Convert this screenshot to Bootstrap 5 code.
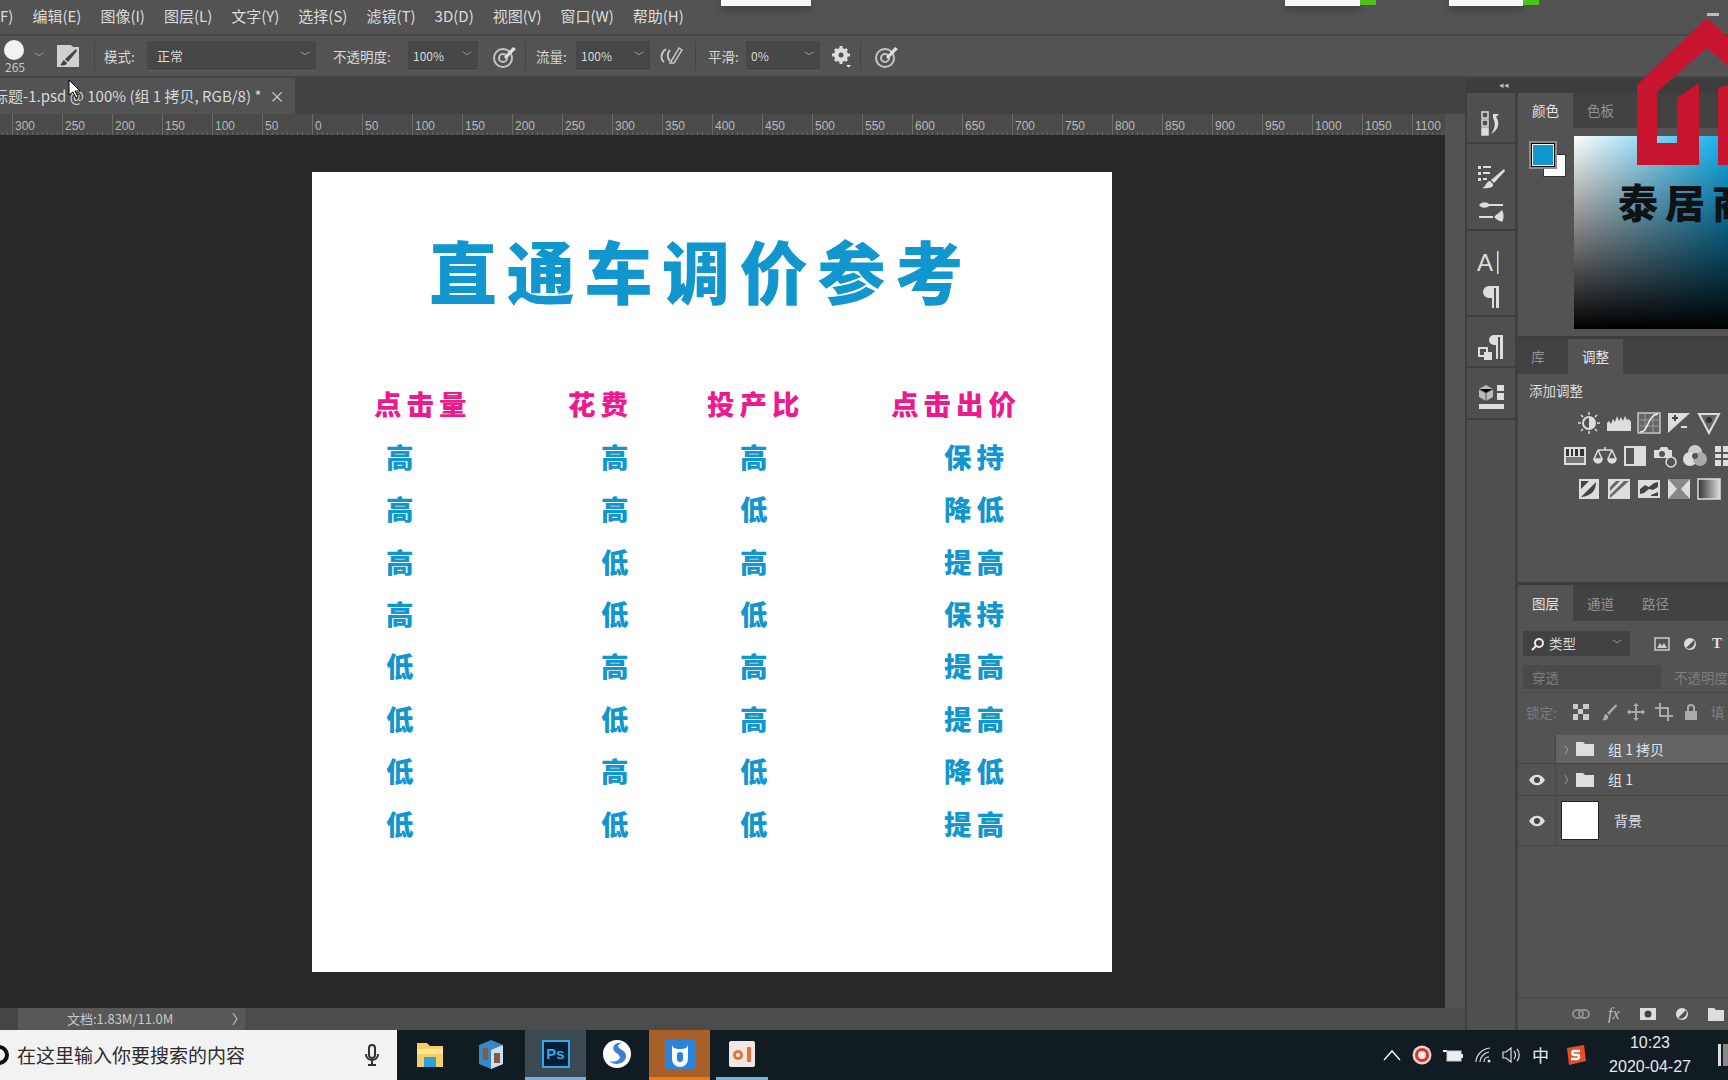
<!DOCTYPE html>
<html lang="zh-CN">
<head>
<meta charset="UTF-8">
<title>直通车调价参考 - Photoshop</title>
<link href="https://cdn.jsdelivr.net/npm/bootstrap@5.3.0/dist/css/bootstrap.min.css" rel="stylesheet">
<style>
html, body { width: 1728px; height: 1080px; overflow: hidden; }
body { background: #535353; color: #d8d8d8; font-family: "Liberation Sans", "Noto Sans CJK SC", sans-serif; font-size: 13px; position: relative; }
.zh { font-family: "Noto Sans CJK SC", sans-serif; }

/* top of the window */
.menu-bar { height: 36px; flex: none; margin-left: -5px; gap: 19px; border-bottom: 2px solid #474747; font-size: 15px; color: #dcdcdc; width: 1733px; padding-bottom: 2px; }
.opt-bar { height: 42px; flex: none; display: grid; align-items: center; grid-template-columns: 30px 26px 38px 6px 47px 169px 14px 74px 74px 47px 8px 41px 76px 45px 10px 41px 74px 40px 10px 40px; border-bottom: 2px solid #454545; font-size: 13.5px; }
.opt-label { padding-left: 3px; white-space: nowrap; }
.opt-sep { width: 1px; height: 30px; background: #454545; }
.opt-field { height: 30px; background: #474747; display: flex; align-items: center; justify-content: space-between; padding: 0 6px 0 5px; border-bottom: 1px solid #5e5e5e; font-size: 12px; }
.opt-select { padding-left: 10px; font-size: 13px; }
.brush-dot { width: 20px; height: 20px; border-radius: 50%; background: #f2f2f2; margin: 0 0 0 4px; }
.brush-num { font-size: 12px; line-height: 12px; margin-left: 5px; margin-top: 1px; color: #c8c8c8; }
.chev { color: #a8a8a8; font-size: 10px; }

/* document area */
.main-row { height: 952px; flex: none; }
.left-side { width: 1465px; flex: none; height: 952px; }
.tab-row { height: 36px; flex: none; background: #424242; }
.doc-tab { width: 295px; background: #535353; white-space: nowrap; overflow: hidden; font-size: 15px; }
.doc-tab span:first-child { margin-left: -7px; }
.ruler-row { width: 1445px; height: 21px; flex: none; background: #4a4a4a; overflow: hidden; background-image: repeating-linear-gradient(to right, #666 0 1px, transparent 1px 5px); background-size: 100% 3px; background-repeat: no-repeat; background-position: 2px bottom; color: #b8b8b8; font-size: 12px; }
.ruler-gap { width: 12px; flex: none; }
.ruler-cell { width: 50px; flex: none; border-left: 1px solid #6a6a6a; padding-left: 2px; line-height: 25px; }
.canvas-area { width: 1445px; height: 873px; flex: none; background: #282828; padding: 37px 0 0 312px; }
.sheet { width: 800px; height: 800px; background: #fff; padding-top: 58px; font-family: "Noto Sans CJK SC", sans-serif; font-weight: 900; }
.sheet-title { margin: 0; padding-left: 117px; font-size: 68px; line-height: 80px; letter-spacing: 9.7px; color: #1296cf; font-weight: 900; white-space: nowrap; }
.price-grid { margin: 68px 0 0 62px; display: grid; grid-template-columns: 194px 139px 184px 160px; grid-auto-rows: 52.4px; align-items: center; font-size: 27.5px; letter-spacing: 5px; line-height: 1; color: #1296cf; white-space: nowrap; }
.price-head { color: #ec1a8e; }
.off-0 { padding-left: 12px; }
.off-1, .off-2 { padding-left: 33px; }
.off-3 { padding-left: 53px; }
.status-row { height: 22px; flex: none; width: 1465px; background: #4c4c4c; font-size: 13px; }
.status-zoom { width: 18px; background: #444; height: 100%; }
.status-info { width: 227px; height: 100%; background: #585858; padding: 0 0 0 49px; color: #c8c8c8; }

/* collapsed icon column */
.dock-line { width: 2px; flex: none; background: #3d3d3d; }
.dock-strip { height: 15px; flex: none; background: #3d3d3d; color: #bbb; font-size: 9px; line-height: 15px; padding-left: 32px; }
.dock-col { width: 48px; flex: none; border-right: 3px solid #3f3f3f; box-sizing: content-box; background: #4f4f4f; }
.dock-group { border-bottom: 2px solid #3f3f3f; gap: 10px; padding-top: 12px; }
.g-51 { height: 51px; }
.g-87 { height: 87px; }

/* panels */
.panel-side { width: 210px; flex: none; }
.panel-tabs { background: #424242; font-size: 13.5px; color: #929292; flex: none; }
.panel-tab { width: 55px; text-align: center; }
.panel-tab.on { background: #535353; color: #e4e4e4; }
.panel-gap { height: 3px; flex: none; background: #3d3d3d; }
.fg-swatch { left: 13px; top: 15px; width: 24px; height: 24px; background: #1296cf; border: 1px solid #000; outline: 2px solid #8d8d8d; box-shadow: inset 0 0 0 1px #fff; z-index: 1; }
.bg-swatch { left: 25px; top: 26px; width: 23px; height: 23px; background: #fff; border: 1px solid #333; }
.color-field { position: absolute; left: 56px; top: 8px; width: 154px; height: 193px; background: linear-gradient(to bottom, rgba(0,0,0,0), #000), linear-gradient(to right, #fff, #0fb0f0); }
.adj-row { gap: 6px; height: 33px; align-items: center; }
.adj-row svg { width: 24px; height: 24px; flex: none; }
.layer-select { height: 25px; width: 107px; margin: 10px 0 0 5px; background: #424242; padding: 0 8px; font-size: 13.5px; }
.blend-row { height: 24px; margin: 9px 0 0 5px; color: #7d7d7d; font-size: 13.5px; }
.blend-field { width: 144px; height: 24px; background: #4a4a4a; padding-left: 9px; }
.lock-row { height: 39px; margin-top: 3px; border-top: 1px solid #484848; padding-left: 8px; color: #7d7d7d; font-size: 13.5px; white-space: nowrap; }
.eye-col { width: 38px; flex: none; border-right: 1px solid #484848; }
.layer-row { border-bottom: 1px solid #474747; font-size: 14px; color: #e2e2e2; }
.layer-sel { background: #646464; }
.lay-thumb { width: 38px; height: 39px; background: #fff; border: 1px solid #222; margin-left: 5px; }
.panel-foot { margin-top: auto; height: 33px; border-top: 1px solid #464646; color: #aaa; }

/* taskbar */
.task-bar { height: 50px; flex: none; background: #101b22; }
.search-box { width: 397px; flex: none; background: #f2f2f2; color: #2c2c2c; font-size: 19px; padding-left: 17px; white-space: nowrap; overflow: hidden; }
.search-ring { left: -11px; top: 15px; width: 20px; height: 20px; border-radius: 50%; border: 4px solid #111; }
.task-app { width: 61px; height: 100%; flex: none; border-bottom: 3px solid transparent; }
.app-ps { background: #3b4a50; border-bottom-color: #76b0de; }
.app-bull { background: #a8602a; border-bottom-color: #f07a10; }
.app-open { border-bottom-color: #76b0de; }
.tray-time { width: 100px; flex: none; margin-left: 14px; text-align: center; font-size: 16px; line-height: 24px; color: #e8e8e8; white-space: nowrap; }

/* things lying over the window */
.toast-strip { position: absolute; top: 0; height: 6px; background: #f4f8fb; box-shadow: 0 3px 8px rgba(0,0,0,.35); z-index: 5; }
.toast-end { position: absolute; right: -16px; top: 0; width: 16px; height: 5px; background: #4dc21f; }
.min-dash { position: absolute; left: 1707px; top: 13px; width: 12px; height: 3px; background: #bcbcbc; z-index: 7; }
.logo-mark { position: absolute; left: 0; top: 0; z-index: 6; pointer-events: none; }
.logo-text { position: absolute; left: 1618px; top: 176px; font-family: "Noto Sans CJK SC", sans-serif; font-weight: 900; font-size: 40px; line-height: 50px; letter-spacing: 7px; color: #0c1216; white-space: nowrap; z-index: 6; }
.mouse-arrow { position: absolute; left: 68px; top: 79px; z-index: 8; }
</style>
</head>
<body>

<!-- menu -->
<div class="menu-bar d-flex align-items-center zh">
  <span>(F)</span><span>编辑(E)</span><span>图像(I)</span><span>图层(L)</span><span>文字(Y)</span><span>选择(S)</span><span>滤镜(T)</span><span>3D(D)</span><span>视图(V)</span><span>窗口(W)</span><span>帮助(H)</span>
</div>

<!-- tool options -->
<div class="opt-bar zh">
  <div><div class="brush-dot"></div><div class="brush-num">265</div></div>
  <span class="chev ps-1">﹀</span>
  <svg width="24" height="24" viewBox="0 0 24 24"><path d="M1 1h14l2 2h6v20H1z" fill="#d0d0d0"/><path d="M20 5 9 15l3 3L21 7zM8 16c-2 1-2 4-4 5 3 1 7 0 7-2z" fill="#444"/></svg>
  <div class="opt-sep"></div>
  <span class="opt-label" style="padding-left:4px">模式:</span>
  <div class="opt-field opt-select"><span>正常</span><span class="chev">﹀</span></div>
  <span></span>
  <span class="opt-label">不透明度:</span>
  <div class="opt-field" style="margin-left:4px"><span>100%</span><span class="chev">﹀</span></div>
  <svg style="margin-left:14px" width="26" height="26" viewBox="0 0 26 26" fill="none" stroke="#c4c4c4" stroke-width="2"><circle cx="11" cy="15" r="9"/><circle cx="11" cy="15" r="4"/><path d="m12 14 9-10 3 2-10 10z" fill="#ddd" stroke="none"/></svg>
  <div class="opt-sep"></div>
  <span class="opt-label">流量:</span>
  <div class="opt-field" style="margin-left:2px"><span>100%</span><span class="chev">﹀</span></div>
  <svg class="ms-2" width="26" height="26" viewBox="0 0 26 26" fill="none" stroke="#c4c4c4" stroke-width="2"><path d="M8 6c-5 3-6 10-2 13M12 7c-3 3-3 8 0 11"/><path d="m12 20 9-15 3 2-8 13z" stroke-width="1.5"/></svg>
  <div class="opt-sep"></div>
  <span class="opt-label">平滑:</span>
  <div class="opt-field"><span>0%</span><span class="chev">﹀</span></div>
  <svg style="margin-left:11px" width="22" height="24" viewBox="0 0 22 24"><circle cx="10" cy="11" r="5" fill="none" stroke="#ddd" stroke-width="4"/><path d="M10 2v18M1 11h18M4 5l12 12M16 5 4 17" stroke="#ddd" stroke-width="3"/><circle cx="10" cy="11" r="2.5" fill="#535353"/><path d="m15 21 5 0-2.500 2.500z" fill="#eee"/></svg>
  <div class="opt-sep"></div>
  <svg class="ms-1" width="26" height="26" viewBox="0 0 26 26" fill="none" stroke="#c4c4c4" stroke-width="2"><circle cx="11" cy="15" r="9"/><circle cx="11" cy="15" r="4"/><path d="m12 14 9-10 3 2-10 10z" fill="#ddd" stroke="none"/></svg>
</div>

<div class="main-row d-flex">
  <div class="left-side d-flex flex-column">
    <div class="tab-row d-flex">
      <div class="doc-tab d-flex align-items-center zh"><span>标题-1.psd @ 100% (组 1 拷贝, RGB/8) *</span><span class="ms-2">×</span></div>
    </div>
    <div class="ruler-row d-flex" id="ruler"><div class="ruler-gap"></div></div>
    <div class="canvas-area">
      <div class="sheet">
        <h1 class="sheet-title">直通车调价参考</h1>
        <div class="price-grid" id="priceGrid"></div>
      </div>
    </div>
    <div class="status-row d-flex align-items-center zh">
      <div class="status-zoom"></div>
      <div class="status-info d-flex align-items-center justify-content-between"><span>文档:1.83M/11.0M</span><span>〉</span></div>
    </div>
  </div>

  <div class="dock-line"></div>
  <div class="flex-grow-1 d-flex flex-column">
    <div class="dock-strip">◂◂</div>
    <div class="d-flex flex-grow-1" style="min-height:0">
      <!-- collapsed panels -->
      <div class="dock-col">
        <div class="dock-group g-51 d-flex flex-column align-items-center justify-content-center">
          <svg width="24" height="28" viewBox="0 0 24 28" fill="none" stroke="#ddd" stroke-width="1.500"><rect x="3" y="2" width="6" height="6"/><rect x="3" y="10" width="6" height="6"/><rect x="3" y="18" width="6" height="7" fill="#ddd"/><path d="M14 4h6l-3 3c4 5 3 13-5 17 4-5 5-11 2-16z" fill="#ddd" stroke="none"/></svg>
        </div>
        <div class="dock-group g-87 d-flex flex-column align-items-center justify-content-center">
          <svg width="28" height="26" viewBox="0 0 28 26"><path d="M1 3h3v3H1zM1 9h3v3H1zM1 15h3v3H1zM6 3h8v2H6zM6 9h7v2H6zM6 15h4v2H6z" fill="#ddd"/><path d="M27 6 14 17l3 3L28 8zM13 18c-4 0-4 6-8 7 5 1 12 0 11-4z" fill="#ddd"/></svg>
          <svg width="28" height="24" viewBox="0 0 28 24"><path d="M2 6c3-4 8-3 10-1h14v2H12c-2 2-7 3-10-1zM2 17h14v2H2z" fill="#ddd"/><path d="M17 18c2-2 6-5 8-7 2 3 2 9 0 12-3-1-6-3-8-5z" fill="#ddd"/></svg>
        </div>
        <div class="dock-group g-87 d-flex flex-column align-items-center justify-content-center" style="height:86px">
          <svg width="28" height="26" viewBox="0 0 28 26"><text x="0" y="22" font-family="Liberation Sans" font-size="24" fill="#ddd">A</text><path d="M20 2h1.500v23H20z" fill="#ddd"/></svg>
          <svg width="20" height="24" viewBox="0 0 20 24"><path d="M18 1H8a6 6 0 0 0 0 12h3v10h2V3h2v20h3z" fill="#ddd"/></svg>
        </div>
        <div class="dock-group g-51 d-flex flex-column align-items-center justify-content-center">
          <svg width="28" height="28" viewBox="0 0 28 28"><path d="M26 1h-9a5 5 0 0 0 0 10h2v14h2V3h2v22h3z" fill="#ddd"/><rect x="2" y="14" width="8" height="8" fill="none" stroke="#ddd" stroke-width="2"/><rect x="7" y="18" width="8" height="8" fill="#ddd"/></svg>
        </div>
        <div class="dock-group g-51 d-flex flex-column align-items-center justify-content-center" style="height:52px;padding-top:8px">
          <svg width="28" height="28" viewBox="0 0 28 28"><path d="M9 2 2 6v8l7 4 7-4V6z" fill="#bbb"/><path d="M9 10v8M2 6l7 4 7-4" stroke="#4f4f4f"/><path d="M20 2h7v6h-7zM20 10h7v7h-7zM2 21h25v5H2z" fill="#ddd"/></svg>
        </div>
      </div>

      <div class="panel-side d-flex flex-column">
        <!-- colour -->
        <div class="panel-tabs d-flex align-items-center zh" style="height:35px">
          <div class="panel-tab on h-100 d-flex align-items-center justify-content-center">颜色</div>
          <div class="panel-tab">色板</div>
        </div>
        <div class="position-relative" style="height:208px;flex:none">
          <div class="position-absolute fg-swatch"></div>
          <div class="position-absolute bg-swatch"></div>
          <div class="color-field"></div>
        </div>
        <div class="panel-gap"></div>
        <!-- adjustments -->
        <div class="panel-tabs d-flex zh" style="height:35px">
          <div class="panel-tab" style="width:50px;line-height:35px;padding-right:10px">库</div>
          <div class="panel-tab on" style="line-height:35px">调整</div>
        </div>
        <div style="height:208px;flex:none">
          <div class="zh" style="padding:6px 0 0 11px;line-height:20px;color:#dcdcdc;font-size:13.5px">添加调整</div>
          <div class="d-flex adj-row" style="padding:6px 0 0 59px;height:39px;box-sizing:border-box">
            <svg viewBox="0 0 24 24"><circle cx="12" cy="12" r="6" fill="none" stroke="#ddd" stroke-width="2"/><path d="M12 6a6 6 0 0 1 0 12z" fill="#ddd"/><path d="M12 1v3M12 20v3M1 12h3M20 12h3M4 4l2 2M18 18l2 2M4 20l2-2M18 6l2-2" stroke="#ddd" stroke-width="1.500"/></svg>
            <svg viewBox="0 0 24 24"><path d="M0 20V12l2-2 2 3 2-5 2 3 2-6 2 5 2-4 2 4 2-5 2 4 2-1 2 3v9z" fill="#ddd"/></svg>
            <svg viewBox="0 0 24 24"><rect x="1" y="2" width="22" height="20" fill="#666" stroke="#c8c8c8" stroke-width="1.500"/><path d="M8 2v20M16 2v20M1 9h22M1 15h22" stroke="#999"/><path d="M3 21c9 0 7-17 18-18" fill="none" stroke="#eee" stroke-width="1.500"/></svg>
            <svg viewBox="0 0 24 24"><rect x="1" y="2" width="22" height="20" fill="#ddd"/><path d="M23 2 1 22h22z" fill="#555"/><path d="M5 7h6M8 4v6" stroke="#444" stroke-width="2"/><path d="M14 16h6" stroke="#ddd" stroke-width="2"/></svg>
            <svg viewBox="0 0 24 24"><path d="M2 3h20L12 22z" fill="#666" stroke="#ddd" stroke-width="2"/><circle cx="12" cy="9" r="3" fill="#333"/></svg>
          </div>
          <div class="d-flex adj-row" style="padding-left:45px">
            <svg viewBox="0 0 24 24"><rect x="1" y="3" width="22" height="18" fill="#ddd"/><path d="M3 5h3v7H3zM8 5h2v7H8zM12 5h3v7h-3zM17 5h4v7h-4z" fill="#333"/><rect x="3" y="13" width="18" height="6" fill="#777"/></svg>
            <svg viewBox="0 0 24 24" fill="none" stroke="#ddd" stroke-width="1.500"><path d="M5 6h14M12 3v3M5 6 1 15M5 6l4 9M19 6l-4 9M19 6l4 9"/><path d="M1 15a4 4 0 0 0 8 0zM15 15a4 4 0 0 0 8 0z" fill="#ddd"/></svg>
            <svg viewBox="0 0 24 24"><rect x="1" y="2" width="22" height="20" fill="#ddd"/><rect x="3" y="4" width="8" height="16" fill="#555"/></svg>
            <svg viewBox="0 0 24 24"><path d="M1 6h5l2-3h6l2 3h3v8H1z" fill="#ddd"/><circle cx="9" cy="10" r="3" fill="#555"/><circle cx="18" cy="18" r="5" fill="#555" stroke="#ddd" stroke-width="1.500"/></svg>
            <svg viewBox="0 0 24 24"><circle cx="12" cy="8" r="7" fill="#ccc"/><circle cx="7" cy="15" r="7" fill="#ddd"/><circle cx="17" cy="15" r="7" fill="#aaa"/><circle cx="12" cy="12" r="3" fill="#555"/></svg>
            <svg viewBox="0 0 24 24"><rect x="2" y="2" width="22" height="20" fill="#ddd"/><path d="M9 2v20M16 2v20M2 9h22M2 15h22" stroke="#555" stroke-width="2"/></svg>
          </div>
          <div class="d-flex adj-row" style="padding-left:59px">
            <svg viewBox="0 0 24 24"><rect x="2" y="2" width="20" height="20" fill="#ddd"/><path d="M4 20 19 5c0 8-4 14-15 15zM4 4h8L4 12z" fill="#444"/></svg>
            <svg viewBox="0 0 24 24"><rect x="1" y="2" width="22" height="20" fill="#ddd"/><path d="M3 18 17 4h5L3 21zM3 10l6-6h4L3 14z" fill="#666"/></svg>
            <svg viewBox="0 0 24 24"><rect x="1" y="3" width="22" height="18" fill="#ddd"/><path d="M3 12l5-4 4 2 5-4 4-1v5l-5 3-4-1-5 4-4 1zM14 18l7-3v4h-7z" fill="#444"/></svg>
            <svg viewBox="0 0 24 24"><rect x="1" y="2" width="22" height="20" fill="#ddd"/><path d="M1 2h22L14 12l9 10H1l9-10z" fill="#888"/></svg>
            <svg viewBox="0 0 24 24"><defs><linearGradient id="gm"><stop offset="0" stop-color="#333"/><stop offset="1" stop-color="#ddd"/></linearGradient></defs><rect x="1" y="2" width="22" height="20" fill="url(#gm)" stroke="#ddd" stroke-width="1.500"/></svg>
          </div>
        </div>
        <div class="panel-gap"></div>
        <!-- layers -->
        <div class="panel-tabs d-flex zh" style="height:36px;line-height:36px">
          <div class="panel-tab on">图层</div>
          <div class="panel-tab">通道</div>
          <div class="panel-tab">路径</div>
        </div>
        <div class="flex-grow-1 d-flex flex-column zh" style="min-height:0">
          <div class="d-flex align-items-center">
            <div class="layer-select d-flex align-items-center justify-content-between">
              <span class="d-flex align-items-center gap-1"><svg width="14" height="14" viewBox="0 0 14 14" fill="none" stroke="#eee" stroke-width="2"><circle cx="8" cy="6" r="4"/><path d="M5 9 1 13"/></svg>类型</span><span class="chev">﹀</span>
            </div>
            <svg class="ms-4" style="margin-top:10px" width="16" height="14" viewBox="0 0 16 14"><rect x="1" y="1" width="14" height="12" fill="none" stroke="#ccc" stroke-width="1.500"/><path d="m3 11 3-5 2 3 2-3 3 5z" fill="#ccc"/></svg>
            <svg style="margin:10px 0 0 13px" width="14" height="14" viewBox="0 0 14 14"><circle cx="7" cy="7" r="6" fill="#ddd"/><path d="M11 3 3 11a6 6 0 0 0 8-8z" fill="#535353"/></svg>
            <span style="margin:10px 0 0 15px;font:700 15px 'Liberation Serif',serif;color:#ddd">T</span>
          </div>
          <div class="blend-row d-flex align-items-center">
            <div class="blend-field d-flex align-items-center">穿透</div>
            <span class="ms-2 text-nowrap" style="padding-left:5px">不透明度</span>
          </div>
          <div class="lock-row d-flex align-items-center gap-2">
            <span>锁定:</span>
            <svg class="ms-2" width="16" height="16" viewBox="0 0 16 16"><rect width="16" height="16" fill="#ccc"/><path d="M5 0h5v5H5zM0 5h5v5H0zM10 5h6v5h-6zM5 10h5v6H5z" fill="#555"/></svg>
            <svg class="ms-1" width="16" height="18" viewBox="0 0 16 18"><path d="M15 1 6 10l2 2 8-9zM5 11c-3 1-1 5-4 6 3 1 7 0 6-4z" fill="#aaa"/></svg>
            <svg style="margin-left:2px" width="18" height="18" viewBox="0 0 18 18"><path d="M9 0l3 3h-2v5h5V6l3 3-3 3v-2h-5v5h2l-3 3-3-3h2v-5H3v2L0 9l3-3v2h5V3H6z" fill="#aaa"/></svg>
            <svg style="margin-left:2px" width="18" height="18" viewBox="0 0 18 18" fill="none" stroke="#aaa" stroke-width="2"><path d="M0 5h13v13M5 0v13h13"/></svg>
            <svg style="margin-left:2px" width="16" height="18" viewBox="0 0 16 18"><rect x="2" y="8" width="12" height="9" fill="#aaa"/><path d="M5 8V5a3 3 0 0 1 6 0v3" fill="none" stroke="#aaa" stroke-width="2"/></svg>
            <span class="ms-1">填</span>
          </div>
          <div class="layer-row d-flex" style="height:29px;margin-top:4px">
            <div class="eye-col"></div>
            <div class="layer-sel flex-grow-1 d-flex align-items-center">
              <span class="ms-2 chev">〉</span>
              <svg style="margin-left:2px" width="18" height="14" viewBox="0 0 18 14"><path d="M0 0h7l2 2h9v12H0z" fill="#ddd"/></svg>
              <span style="margin-left:14px">组 1 拷贝</span>
            </div>
          </div>
          <div class="layer-row d-flex" style="height:32px">
            <div class="eye-col d-flex align-items-center justify-content-center"><svg width="16" height="12" viewBox="0 0 16 12"><path d="M0 6c4-7 12-7 16 0-4 7-12 7-16 0z" fill="#ddd"/><circle cx="8" cy="6" r="3" fill="#444"/></svg></div>
            <div class="flex-grow-1 d-flex align-items-center">
              <span class="ms-2 chev">〉</span>
              <svg style="margin-left:2px" width="18" height="14" viewBox="0 0 18 14"><path d="M0 0h7l2 2h9v12H0z" fill="#ddd"/></svg>
              <span style="margin-left:14px">组 1</span>
            </div>
          </div>
          <div class="layer-row d-flex" style="height:50px">
            <div class="eye-col d-flex align-items-center justify-content-center"><svg width="16" height="12" viewBox="0 0 16 12"><path d="M0 6c4-7 12-7 16 0-4 7-12 7-16 0z" fill="#ddd"/><circle cx="8" cy="6" r="3" fill="#444"/></svg></div>
            <div class="flex-grow-1 d-flex align-items-center">
              <div class="lay-thumb"></div>
              <span style="margin-left:15px">背景</span>
            </div>
          </div>
          <div class="panel-foot d-flex align-items-center">
            <svg style="margin-left:54px" width="18" height="10" viewBox="0 0 18 10" fill="none" stroke="#8f8f8f" stroke-width="2"><rect x="1" y="1" width="10" height="8" rx="4"/><rect x="7" y="1" width="10" height="8" rx="4"/></svg>
            <span style="margin-left:18px;font:italic 16px 'Liberation Serif',serif;color:#bbb">fx</span>
            <svg style="margin-left:20px" width="16" height="12" viewBox="0 0 16 12"><rect width="16" height="12" fill="#ddd"/><circle cx="8" cy="6" r="3.500" fill="#444"/></svg>
            <svg style="margin-left:19px" width="14" height="14" viewBox="0 0 14 14"><circle cx="7" cy="7" r="6" fill="#ddd"/><path d="M11 3 3 11a6 6 0 0 0 8-8z" fill="#535353"/></svg>
            <svg style="margin-left:19px" width="16" height="13" viewBox="0 0 16 13"><path d="M0 0h6l2 2h8v11H0z" fill="#ddd"/></svg>
          </div>
        </div>
      </div>
    </div>
  </div>
</div>

<!-- taskbar -->
<div class="task-bar d-flex align-items-center">
  <div class="search-box position-relative h-100 d-flex align-items-center zh">
    <div class="position-absolute search-ring"></div>
    <span class="flex-grow-1">在这里输入你要搜索的内容</span>
    <svg style="margin-right:17px" width="16" height="22" viewBox="0 0 16 22" fill="none" stroke="#333" stroke-width="2"><rect x="5" y="1" width="6" height="13" rx="3"/><path d="M2 10c0 8 12 8 12 0M8 17v4M4 21h8"/></svg>
  </div>
  <div class="d-flex h-100" style="margin-left:2px">
    <div class="task-app d-flex align-items-center justify-content-center">
      <svg width="28" height="28" viewBox="0 0 28 28"><path d="M1 3h10l3 3h13v21H1z" fill="#f4cf66"/><path d="M1 9h26v5H1z" fill="#ffe591"/><path d="M8 17h12v10H8z" fill="#2f9fe0"/></svg>
    </div>
    <div class="task-app d-flex align-items-center justify-content-center" style="width:65px;padding-right:4px">
      <svg width="28" height="30" viewBox="0 0 28 30"><path d="M2 6 14 1l12 5v19l-12 5-12-5z" fill="#3a86c8"/><path d="M14 11v19l12-5V6z" fill="#c9e0f2"/><path d="M6 9h5v12H6zM17 14h6v10h-6z" fill="#8a5a3a"/></svg>
    </div>
    <div class="task-app app-ps d-flex align-items-center justify-content-center">
      <div style="width:28px;height:28px;background:#061e33;border:2px solid #2fa8ee;color:#2fa8ee;font-size:15px;line-height:23px;text-align:center;font-weight:700">Ps</div>
    </div>
    <div class="task-app d-flex align-items-center justify-content-center" style="width:63px;padding-right:2px">
      <svg width="30" height="30" viewBox="0 0 30 30"><circle cx="15" cy="15" r="14" fill="#fff"/><path d="M21 4c-9-2-12 5-8 9 4 3 7 5 3 8-2 2-6 2-9 1 7 6 17 2 17-5 0-6-8-7-8-10 0-2 3-3 5-3z" fill="#3a7fd8"/></svg>
    </div>
    <div class="task-app app-bull d-flex align-items-center justify-content-center">
      <svg width="30" height="30" viewBox="0 0 30 30"><rect width="30" height="30" rx="3" fill="#2a84dc"/><path d="M7 6c1 3 3 4 8 4s7-1 8-4v14a7 7 0 0 1-16 0z" fill="#fff"/><rect x="12" y="13" width="6" height="10" rx="3" fill="#2a84dc"/></svg>
    </div>
    <div class="task-app app-open d-flex align-items-center justify-content-center" style="width:52px;margin-left:6px">
      <svg width="28" height="30" viewBox="0 0 28 30"><rect x="1" y="2" width="26" height="26" rx="2" fill="#efe9e2"/><circle cx="10" cy="16" r="5" fill="#e8703a"/><circle cx="10" cy="16" r="2" fill="#fff"/><rect x="19" y="8" width="4" height="15" fill="#e8703a"/></svg>
    </div>
  </div>
  <div class="ms-auto d-flex align-items-center h-100">
    <svg style="margin-right:10px" width="20" height="12" viewBox="0 0 20 12" fill="none" stroke="#e8e8e8" stroke-width="1.500"><path d="m2 11 8-9 8 9"/></svg>
    <svg style="margin-right:11px" width="20" height="20" viewBox="0 0 20 20"><circle cx="10" cy="10" r="9.500" fill="#e8d2d2"/><circle cx="10" cy="10" r="7" fill="#d8342c"/><circle cx="10" cy="10" r="4" fill="#f5e8e8"/></svg>
    <svg style="margin-right:12px" width="20" height="14" viewBox="0 0 20 14"><rect x="4" y="3" width="14" height="10" fill="#eee" stroke="#ccc"/><path d="M18 6h2v4h-2zM0 2h4v2H0z" fill="#eee"/></svg>
    <svg style="margin-right:11px" width="16" height="16" viewBox="0 0 16 16" fill="none" stroke="#ddd" stroke-width="1.200"><path d="M1 15C1 8 7 2 15 1M5 15c0-5 4-9 9-10M9 15c0-3 2-5 5-5"/><circle cx="14" cy="14" r="1.500" fill="#ddd" stroke="none"/></svg>
    <svg style="margin-right:10px" width="20" height="18" viewBox="0 0 20 18" fill="none" stroke="#ddd" stroke-width="1.200"><path d="M1 6h3l5-4v14l-5-4H1zM12 5c2 2 2 6 0 8M15 3c3 3 3 9 0 12"/></svg>
    <span class="zh" style="font-size:17px;color:#eee;margin-right:17px">中</span>
    <svg width="20" height="20" viewBox="0 0 20 20"><path d="m1 3 17-3 2 16-17 4z" fill="#e2502a"/><path d="M14 6H8c-2 0-2 4 0 4h4c2 0 1 4-1 4H5" fill="none" stroke="#fff" stroke-width="2.500"/></svg>
    <div class="tray-time"><div>10:23</div><div>2020-04-27</div></div>
    <div style="width:10px;height:22px;margin-left:18px;background:linear-gradient(to right,#ddd 0 3px,transparent 3px 5px,#888 5px)"></div>
  </div>
</div>

<!-- overlays: notification edges, window button, watermark, pointer -->
<div class="toast-strip" style="left:721px;width:90px"></div>
<div class="toast-strip" style="left:1285px;width:75px"><div class="toast-end"></div></div>
<div class="toast-strip" style="left:1449px;width:74px"><div class="toast-end"></div></div>
<div class="min-dash"></div>
<svg class="logo-mark" width="1728" height="230" viewBox="0 0 1728 230"><path d="M1707 18 1637 85v80h62V83l-22 15v45h-20V92l50-44 21 18V37zM1718 88l10-3v80h-10z" fill="#c8152f"/></svg>
<div class="logo-text">泰居商</div>
<svg class="mouse-arrow" width="14" height="20" viewBox="0 0 14 20"><path d="M1 1v15l4-3 3 6 2-1-3-6h5z" fill="#fff" stroke="#000"/></svg>

<script>
  const ruler = document.getElementById("ruler");
  for (let n = 300; n >= 0; n -= 50) ruler.innerHTML += `<div class="ruler-cell">${n || 0}</div>`;
  for (let n = 50; n <= 1100; n += 50) ruler.innerHTML += `<div class="ruler-cell">${n}</div>`;

  const head = ["点击量", "花费", "投产比", "点击出价"];
  const rows = [
    ["高", "高", "高", "保持"],
    ["高", "高", "低", "降低"],
    ["高", "低", "高", "提高"],
    ["高", "低", "低", "保持"],
    ["低", "高", "高", "提高"],
    ["低", "低", "高", "提高"],
    ["低", "高", "低", "降低"],
    ["低", "低", "低", "提高"],
  ];
  document.getElementById("priceGrid").innerHTML =
    head.map((h) => `<div class="price-head">${h}</div>`).join("") +
    rows.map((r) => r.map((v, i) => `<div class="off-${i}">${v}</div>`).join("")).join("");
</script>
<script src="https://cdn.jsdelivr.net/npm/bootstrap@5.3.0/dist/js/bootstrap.bundle.min.js"></script>
</body>
</html>
